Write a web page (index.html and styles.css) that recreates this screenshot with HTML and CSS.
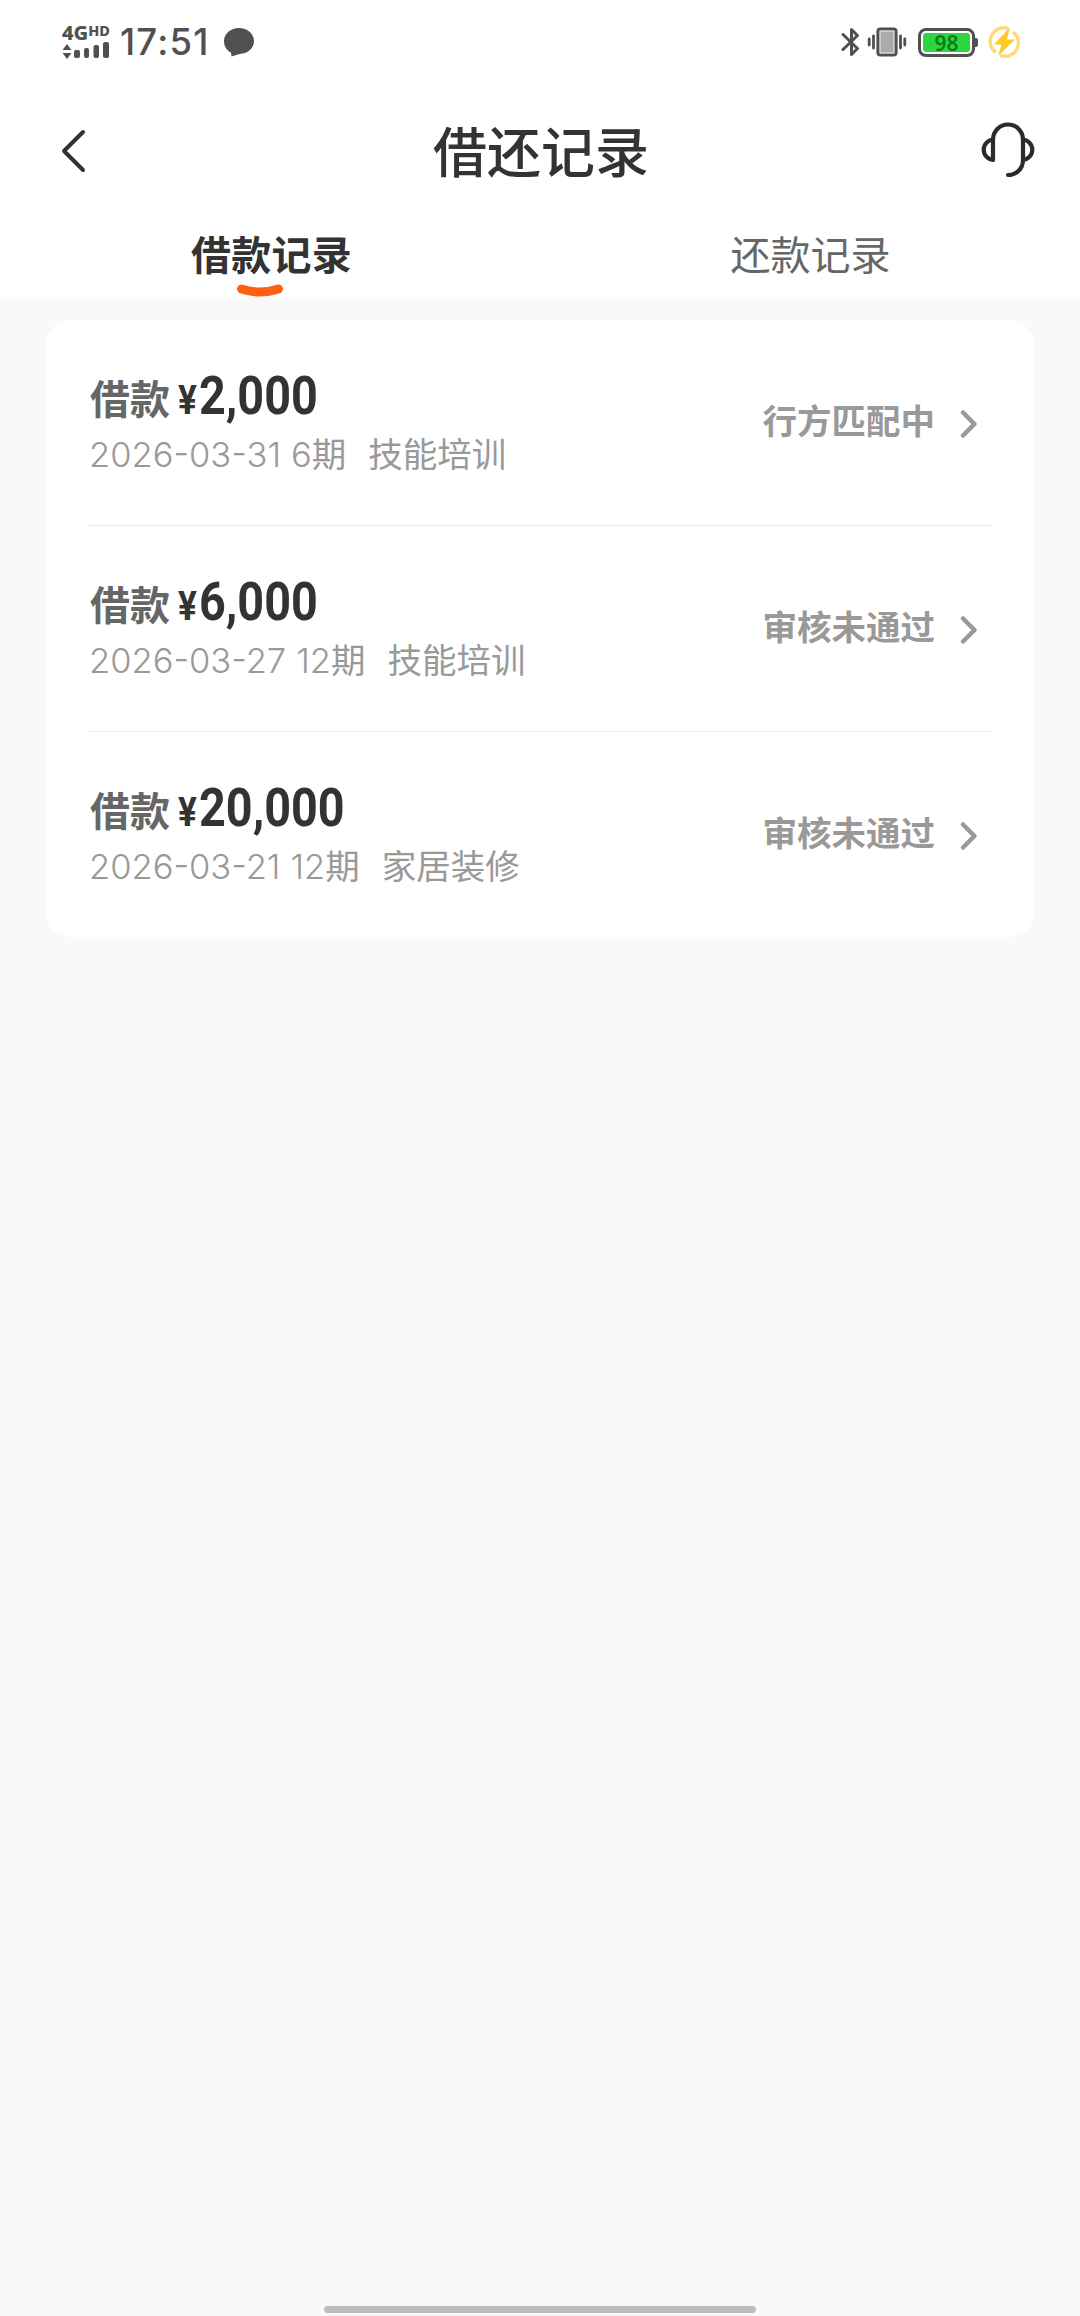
FILE: index.html
```html
<!DOCTYPE html>
<html lang="zh-CN">
<head>
<meta charset="utf-8">
<title>借还记录</title>
<link rel="stylesheet" href="styles.css">
</head>
<body>
<header class="top">
  <div class="statusbar">
    <div class="status-left">
      <div class="network">
        <div class="net-type">4G<span class="hd">HD</span></div>
        <svg class="bars" width="48" height="17" viewBox="0 0 48 17" fill="#505050"><path d="M5 1l4.500 6h-9zM5 16l4.500-6h-9z"/><rect x="12" y="7" width="6" height="8" rx="2"/><rect x="22" y="5" width="5" height="10" rx="2"/><rect x="31.500" y="2" width="5.500" height="13" rx="2"/><rect x="41" y="-1" width="6" height="16" rx="2"/></svg>
      </div>
      <span class="time">17:51</span>
      <svg class="bubble" width="32" height="32" viewBox="0 0 32 32" fill="#505050"><path d="M16 2c8.300 0 15 5.700 15 13s-6.500 12.700-13.500 12.800L8.500 30.500 8 26.500C3.500 24.500 1 20 1 15 1 7.700 7.700 2 16 2z"/></svg>
    </div>
    <div class="status-right">
      <svg width="20" height="32" viewBox="0 0 20 32" fill="none" stroke="#505050" stroke-width="3" stroke-linejoin="round" stroke-linecap="round"><path d="M2 8.500L16.500 22.500 10.500 28.500V3.500L16.500 9.500 2 23.500"/></svg>
      <svg class="vibrate" width="40" height="32" viewBox="0 0 40 32"><rect x="11" y="3" width="18" height="26" rx="2.500" fill="#aaa" stroke="#505050" stroke-width="3.200"/><rect x="13" y="5" width="14" height="22" fill="none" stroke="#eee"/><path d="M6.500 10v12M2.200 13v6M33.500 10v12M37.800 13v6" stroke="#505050" stroke-width="2.800" stroke-linecap="round"/></svg>
      <div class="battery"><span class="battery-level">98</span></div>
      <svg class="charge" width="32" height="32" viewBox="0 0 32 32"><g fill="none" stroke="#ffdc78" stroke-width="3.500"><path d="M20 2.600A13.500 13.500 0 0 0 8 26.500M12 29.400A13.500 13.500 0 0 0 25 6"/></g><path d="M22 1L6 18.500h7.500L10 30 27 13.500h-8z" fill="#ffcb1f"/></svg>
    </div>
  </div>
  <div class="navbar">
    <svg class="back" width="28" height="48" viewBox="0 0 28 48" fill="none" stroke="#333" stroke-width="4" stroke-linecap="round" stroke-linejoin="round"><path d="M23 6L4 25l19 19"/></svg>
    <h1 class="title">借还记录</h1>
    <svg class="service" width="56" height="56" viewBox="0 0 56 56" fill="none" stroke="#2b2b2b" stroke-width="4.200" stroke-linecap="round" stroke-linejoin="round"><path d="M13 38V17.500a15 15 0 0 1 30 0V38c0 8.500-6.500 15-15 15M13 17.500a10.300 10.300 0 0 0 0 20.500M43 17.500a10.300 10.300 0 0 1 0 20.500"/></svg>
  </div>
  <nav class="tabs">
    <a class="tab active">借款记录<svg class="mark" width="48" height="13" viewBox="0 0 48 13"><path d="M5.500 5q18.500 6 37 0" fill="none" stroke="#ff5f10" stroke-width="9" stroke-linecap="round"/></svg></a>
    <a class="tab">还款记录</a>
  </nav>
</header>
<main class="list">
  <article class="row">
    <div class="info">
      <div class="loan"><span class="label">借款</span><span class="yen">¥</span><span class="amount">2,000</span></div>
      <div class="meta"><span class="date">2026-03-31</span><span class="term">6<span class="unit">期</span></span><span class="use">技能培训</span></div>
    </div>
    <div class="state">行方匹配中<svg class="arrow" width="20" height="32" viewBox="0 0 20 32"><path d="M4 4.500L15.500 16 4 27.500"/></svg></div>
  </article>
  <article class="row">
    <div class="info">
      <div class="loan"><span class="label">借款</span><span class="yen">¥</span><span class="amount">6,000</span></div>
      <div class="meta"><span class="date">2026-03-27</span><span class="term">12<span class="unit">期</span></span><span class="use">技能培训</span></div>
    </div>
    <div class="state">审核未通过<svg class="arrow" width="20" height="32" viewBox="0 0 20 32"><path d="M4 4.500L15.500 16 4 27.500"/></svg></div>
  </article>
  <article class="row">
    <div class="info">
      <div class="loan"><span class="label">借款</span><span class="yen">¥</span><span class="amount">20,000</span></div>
      <div class="meta"><span class="date">2026-03-21</span><span class="term">12<span class="unit">期</span></span><span class="use">家居装修</span></div>
    </div>
    <div class="state">审核未通过<svg class="arrow" width="20" height="32" viewBox="0 0 20 32"><path d="M4 4.500L15.500 16 4 27.500"/></svg></div>
  </article>
</main>
<div class="home-bar"></div>
</body>
</html>
```
FILE: styles.css
```css
* { box-sizing: border-box; }
body {
  margin: 0;
  width: 1080px;
  height: 2316px;
  display: flex;
  flex-direction: column;
  background: #f9f9f9;
  color: #333;
  font-family: Inter, "Noto Sans CJK SC", sans-serif;
}
svg { display: block; flex: none; }
.top { height: 297px; background: #fff; }

.statusbar {
  height: 84px;
  padding: 0 60px 0 62px;
  display: flex;
  justify-content: space-between;
  color: #505050;
}
.status-left, .status-right { display: flex; align-items: center; }
.network { width: 50px; height: 36px; display: flex; flex-direction: column; }
.net-type {
  height: 18px;
  font: 800 20px/18px "Noto Sans", sans-serif;
  display: flex;
  align-items: flex-start;
}
.hd { font-size: 14.500px; line-height: 12px; }
.bars { overflow: visible; margin-top: 1px; }
.time { width: 98px; margin-left: 8px; font-size: 36.500px; font-weight: 450; letter-spacing: 1.200px; line-height: 40px; }
.bubble { margin-left: 5px; }
.vibrate { margin-left: 6px; }
.battery {
  position: relative;
  width: 57px;
  height: 29px;
  margin-left: 11px;
  padding: 2px;
  border: 3px solid #505050;
  border-radius: 8px;
}
.battery::after {
  content: "";
  position: absolute;
  right: -6px;
  top: 7px;
  width: 3px;
  height: 9px;
  border-radius: 0 2px 2px 0;
  background: #505050;
}
.battery-level {
  display: block;
  height: 19px;
  border-radius: 3px;
  background: #2bd741;
  color: #107a1b;
  text-align: center;
  font: 600 21px/20px "Noto Sans", sans-serif;
}
.charge { margin-left: 13px; }

.navbar {
  height: 132px;
  padding: 0 44px 0 60px;
  display: flex;
  align-items: center;
  justify-content: space-between;
}
.back { width: 28px; margin-right: 14px; }
.title { margin: 7px 0 0; font-size: 54px; font-weight: 500; line-height: 80px; }

.tabs { height: 81px; display: flex; }
.tab {
  position: relative;
  flex: 1;
  text-align: center;
  font-size: 40px;
  line-height: 79px;
  color: #666;
}
.tab.active { padding-left: 2px; font-weight: 700; color: #333; letter-spacing: 0.300px; }
.mark { position: absolute; left: 236px; bottom: 0; }

.list {
  width: 988px;
  height: 617px;
  margin: 23px 0 0 46px;
  padding: 0 42px;
  background: #fff;
  border-radius: 24px;
}
.row {
  height: 206px;
  display: flex;
  justify-content: space-between;
  border-bottom: 1px solid #ebebeb;
}
.row:last-child { border-bottom: 0; }
.info { padding: 47px 0 0 2px; }
.loan { height: 58px; display: flex; align-items: baseline; line-height: 58px; font-weight: 700; }
.label { width: 88px; font-size: 40px; color: #666; }
.yen { width: 21px; font-family: Roboto, sans-serif; font-size: 40px; transform: scaleX(.88); transform-origin: left; }
.amount { font-family: Roboto, sans-serif; font-size: 53px; transform: scaleX(.882); transform-origin: left; }
.meta { display: flex; height: 60px; margin-left: -1px; align-items: baseline; font-size: 34.500px; font-weight: 350; line-height: 60px; color: #999; font-feature-settings: "case"; }
.term { margin-left: 10px; }
.unit, .use { font-weight: 400; }
.use { margin-left: 22px; }
.state { height: 206px; padding: 0 13px 8px 0; display: flex; align-items: center; font-size: 34.500px; font-weight: 700; color: #999; }
.arrow { margin-left: 24px; margin-top: 9px; fill: none; stroke: #999; stroke-width: 4.500; stroke-linecap: round; stroke-linejoin: round; }

.home-bar { width: 432px; height: 7px; margin: auto auto 3px; border-radius: 4px; background: #bdbdbd; }
```
